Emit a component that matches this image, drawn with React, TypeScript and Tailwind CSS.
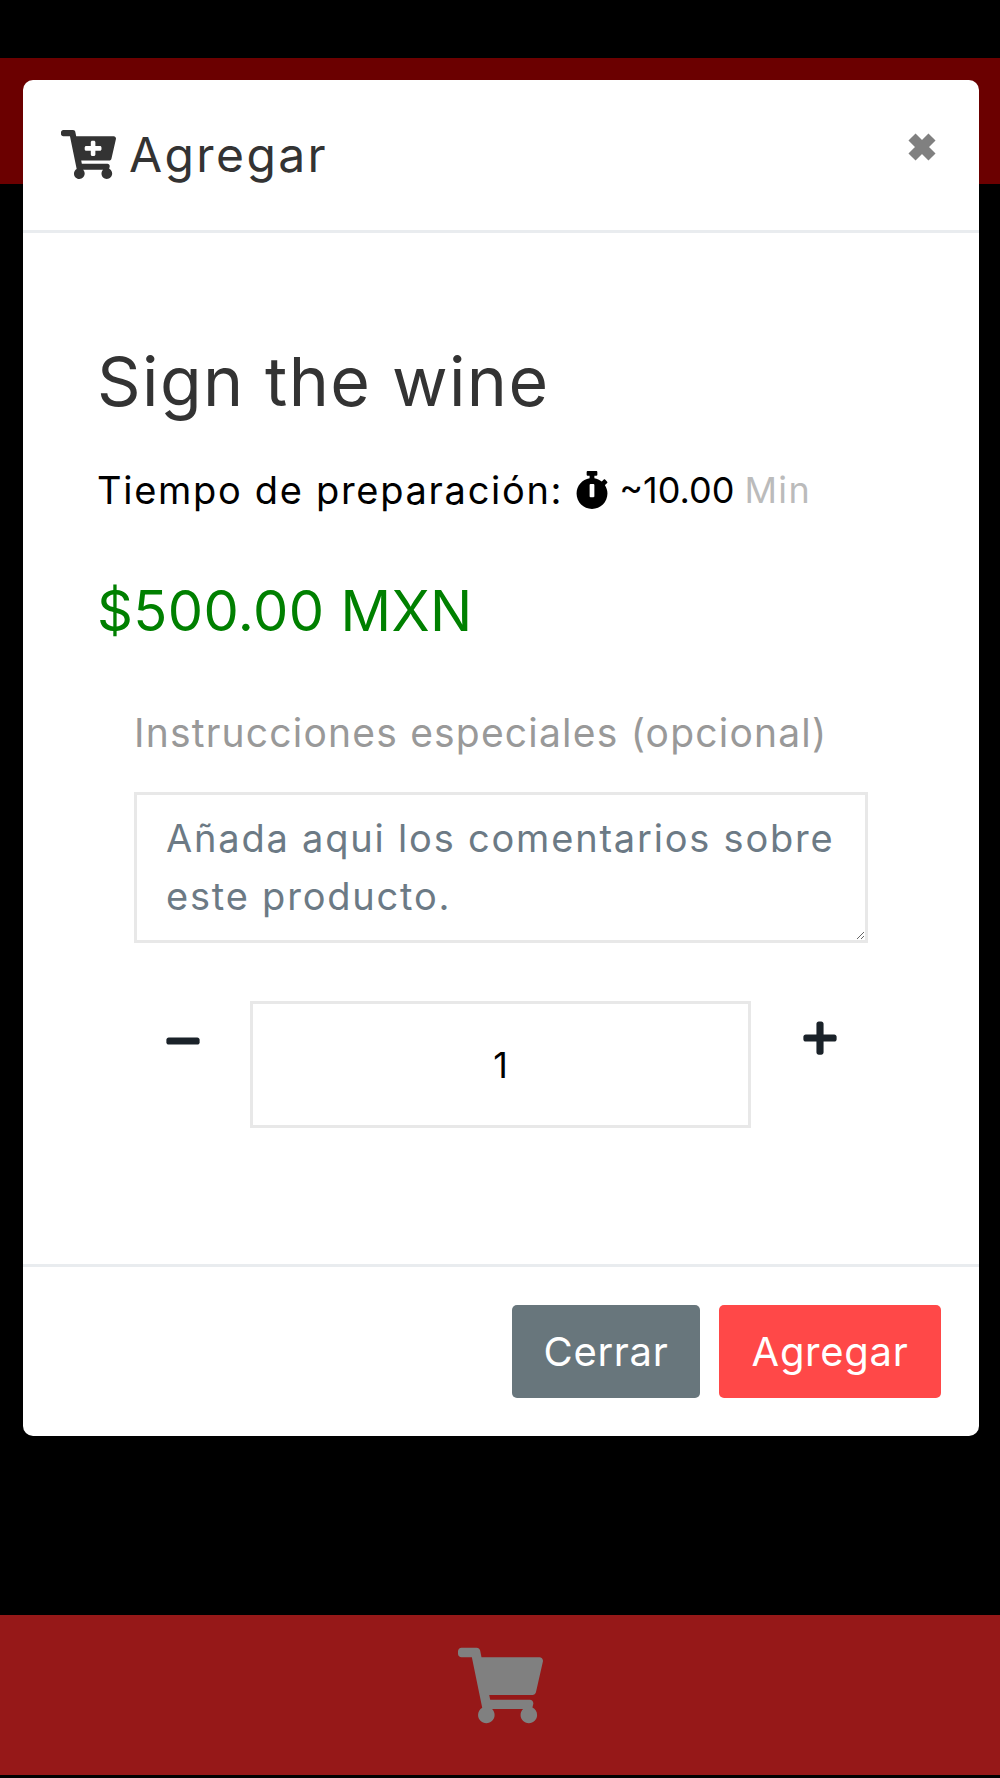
import { FaCartPlus, FaMinus, FaPlus, FaShoppingCart, FaStopwatch } from 'react-icons/fa'

export default function App() {
  return (
    <div className="relative flex h-[1778px] flex-col bg-black font-['Inter',sans-serif] pt-[58px] pb-[3px]">
      <div className="h-[126px] bg-[#6b0000]" />
      <div className="flex-1" />
      <div className="flex h-[160px] items-center justify-center bg-[#961818] pb-[20px]">
        <FaShoppingCart className="text-[85px] text-[#808080]" />
      </div>

      <div className="absolute left-[23px] top-[80px] flex h-[1356px] w-[956px] flex-col rounded-[10px] bg-white">
        <div className="flex h-[153px] justify-between border-b-[3px] border-[#e9ecef] pl-[38px] pr-[43px]">
          <div className="flex h-[150px] items-center gap-[13px] text-[#333333]">
            <FaCartPlus className="-mt-[2px] text-[55px]" />
            <span className="text-[48px] leading-none tracking-[2.4px]">Agregar</span>
          </div>
          <svg className="mt-[53px] h-[28px] w-[28px]" viewBox="0 0 28 28">
            <path d="M4 4 24 24M24 4 4 24" stroke="#808080" strokeWidth="10" />
          </svg>
        </div>

        <div className="flex flex-1 flex-col px-[76px] pt-[108px]">
          <h1 className="-ml-[2px] text-[68px] leading-[80px] tracking-[1.4px] text-[#333333]">Sign the wine</h1>
          <div className="mt-[44px] -ml-[2px] flex items-center text-[38px] leading-[50px] tracking-[1.7px] text-black">
            <span>Tiempo de preparación:</span>
            <FaStopwatch className="ml-[10px] mr-[8px] text-[38px]" />
            <span className="text-[36px] tracking-[0px]">~10.00</span>
            <span className="ml-[10px] text-[36px] tracking-[1.4px] text-[#bbbbbb]">Min</span>
          </div>
          <div className="mt-[61px] -ml-[2px] text-[56px] leading-[70px] tracking-[0.4px] text-[#008000]">$500.00 MXN</div>

          <div className="mt-[62px] flex flex-col px-[35px]">
            <label className="text-[39px] leading-[50px] tracking-[1.2px] text-[#999999]">Instrucciones especiales (opcional)</label>
            <textarea
              className="mt-[34px] h-[151px] w-full border-[3px] border-[#e8e8e8] pl-[29px] pr-[18px] py-[14px] text-[38px] leading-[58px] tracking-[1.8px] placeholder:text-[#6c7a85] outline-none"
              placeholder="Añada aqui los comentarios sobre este producto."
            />
            <div className="mt-[58px] flex items-start">
              <button className="mt-[21px] w-[116px] pl-[30px] text-[38px] text-[#1a2229]">
                <FaMinus />
              </button>
              <input
                readOnly
                defaultValue="1"
                className="h-[127px] w-[501px] border-[3px] border-[#e8e8e8] text-center text-[36px] text-black outline-none"
              />
              <button className="mt-[18px] w-[117px] pl-[50px] text-[38px] text-[#1a2229]">
                <FaPlus />
              </button>
            </div>
          </div>
        </div>

        <div className="flex h-[172px] items-start justify-end gap-[19px] border-t-[3px] border-[#e9ecef] pr-[38px] pt-[38px] text-[40px] tracking-[0.7px] text-white">
          <button className="h-[93px] w-[188px] rounded-[5px] bg-[#68767c]">Cerrar</button>
          <button className="h-[93px] w-[222px] rounded-[5px] bg-[#ff4848]">Agregar</button>
        </div>
      </div>
    </div>
  )
}
